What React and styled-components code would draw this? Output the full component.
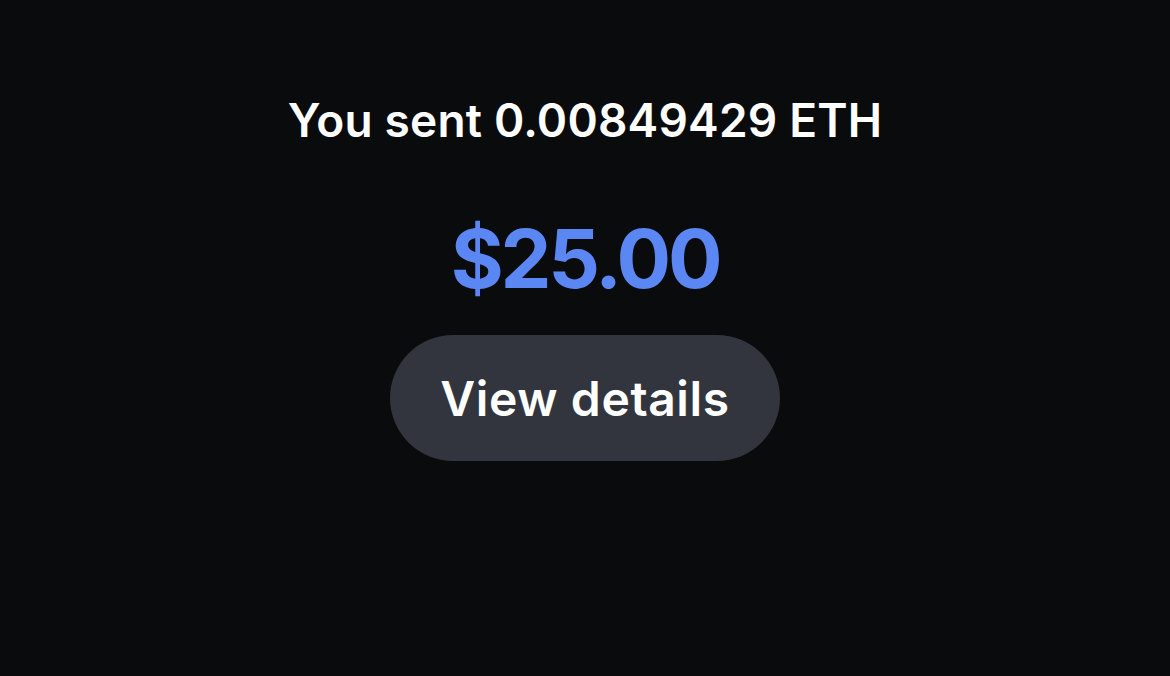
import React from 'react'
import styled, { createGlobalStyle } from 'styled-components'

const GlobalStyle = createGlobalStyle`
  html, body {
    margin: 0;
    padding: 0;
    background: #0a0b0d;
  }
  body {
    font-family: Inter, "Noto Sans", sans-serif;
    -webkit-font-smoothing: antialiased;
  }
`

const Screen = styled.div`
  width: 1170px;
  height: 676px;
  background: #0a0b0d;
  display: flex;
  flex-direction: column;
  align-items: center;
  padding-top: 92px;
  box-sizing: border-box;
`

const Title = styled.h1`
  margin: 0;
  color: #ffffff;
  font-size: 46px;
  font-weight: 600;
  line-height: 56px;
  letter-spacing: 0.2px;
`

const Amount = styled.div`
  margin-top: 62px;
  color: #5b87f4;
  font-size: 81px;
  font-weight: 700;
  line-height: 98px;
  letter-spacing: -3.2px;
`

const DetailsButton = styled.button`
  margin-top: 27px;
  width: 390px;
  height: 126px;
  border: none;
  border-radius: 63px;
  background: #32353d;
  color: #ffffff;
  font-family: inherit;
  font-size: 48px;
  font-weight: 600;
  letter-spacing: 0.6px;
  cursor: pointer;
`

export default function App() {
  return (
    <>
      <GlobalStyle />
      <Screen>
        <Title>You sent 0.00849429 ETH</Title>
        <Amount>$25.00</Amount>
        <DetailsButton>View details</DetailsButton>
      </Screen>
    </>
  )
}
